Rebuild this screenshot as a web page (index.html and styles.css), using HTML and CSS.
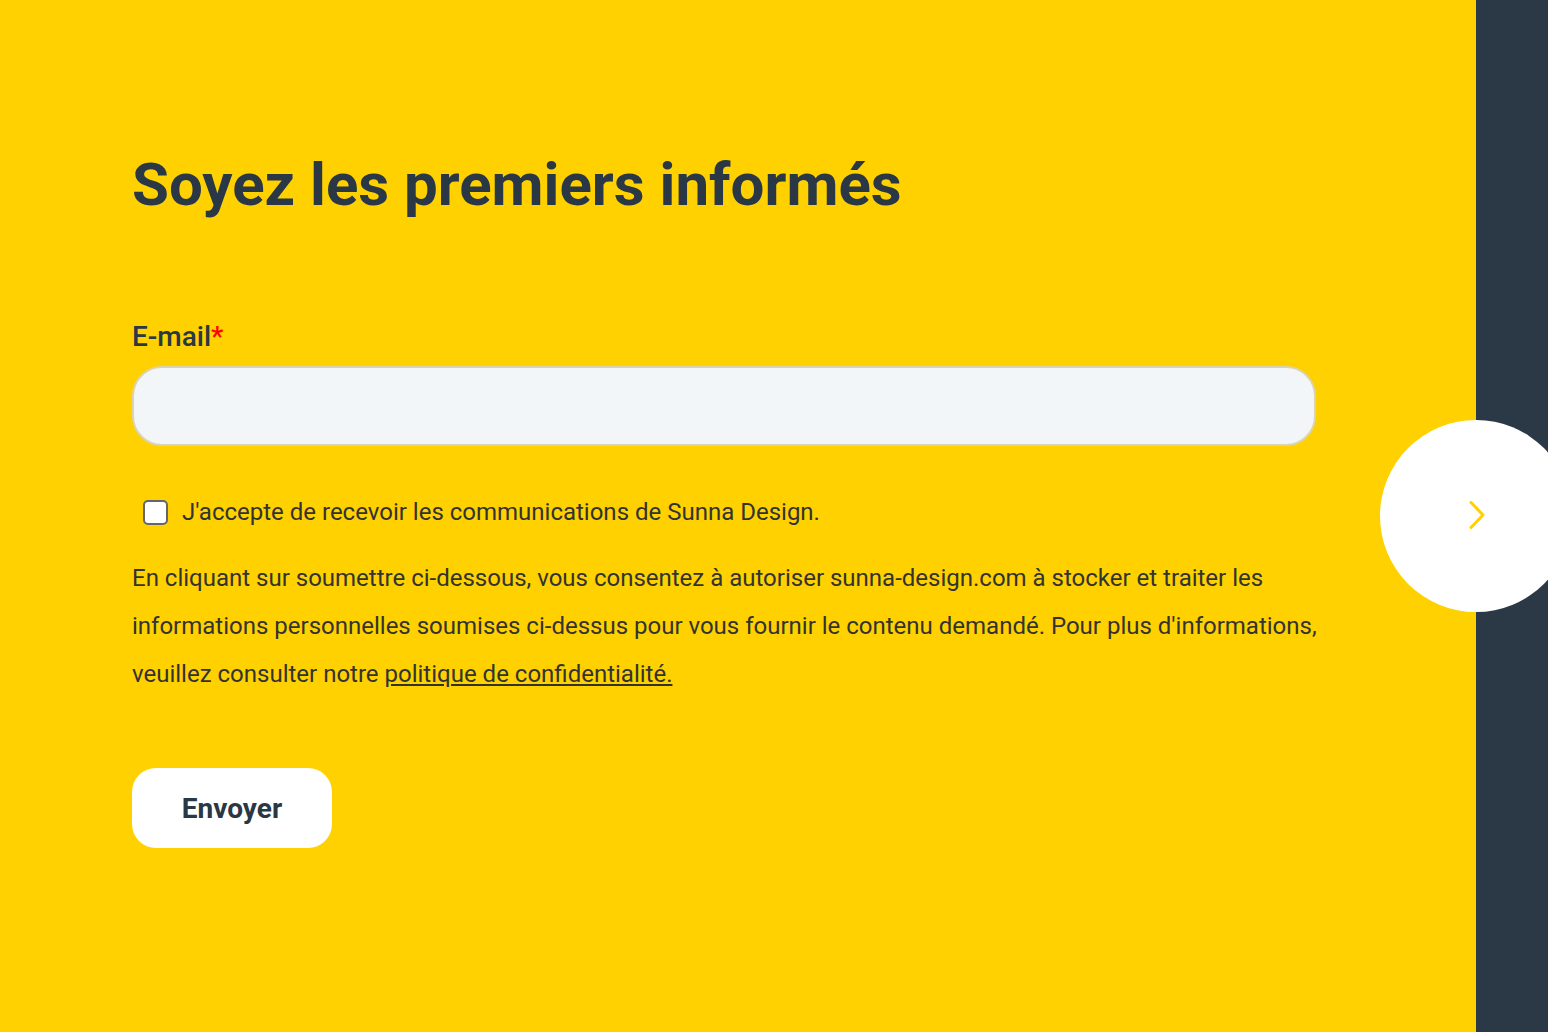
FILE: index.html
```html
<!DOCTYPE html>
<html lang="fr">
  <head>
    <meta charset="UTF-8" />
    <title>Soyez les premiers informés</title>
    <link rel="stylesheet" href="styles.css">
  </head>
  <body>
    <div class="page">
      <div class="main">
        <h1 class="main-title">Soyez les premiers informés</h1>
        <form class="form">
          <label class="field-label" for="email">E-mail<span class="required">*</span></label>
          <input type="email" id="email" class="field-input" />
          <label class="consent">
            <input type="checkbox" class="consent__box" />
            <span>J'accepte de recevoir les communications de Sunna Design.</span>
          </label>
          <p class="legal">
            En cliquant sur soumettre ci-dessous, vous consentez à autoriser sunna-design.com à stocker et traiter les
            informations personnelles soumises ci-dessus pour vous fournir le contenu demandé. Pour plus d'informations,
            veuillez consulter notre <a href="#">politique de confidentialité.</a>
          </p>
          <button type="button" class="submit">Envoyer</button>
        </form>
      </div>
      <div class="sidebar"></div>
      <button class="next" type="button" aria-label="Suivant">
        <svg width="18" height="30" viewBox="0 0 18 30">
          <path d="M3 1.5 L15 14 L3 26.5" fill="none" stroke="#ffd100" stroke-width="3" stroke-linecap="round" stroke-linejoin="round" />
        </svg>
      </button>
    </div>
  </body>
</html>
```

FILE: styles.css
```css
html,
body {
  margin: 0;
  padding: 0;
  width: 100%;
  height: 100%;
}
body {
  font-family: Roboto, "Liberation Sans", sans-serif;
  color: #333;
}
.page {
  display: flex;
  min-height: 100%;
  position: relative;
  overflow: hidden;
}
.main {
  flex: 1;
  min-width: 0;
  background: #ffd100;
  padding: 149px 0 0 132px;
}
.sidebar {
  width: 72px;
  flex-shrink: 0;
  background: #2b3845;
}
.main-title {
  margin: 0 0 100px;
  font-size: 60px;
  line-height: 72px;
  font-weight: 700;
  color: #2a3744;
}
.form {
  display: flex;
  flex-direction: column;
  align-items: flex-start;
  width: 1186px;
}
.field-label {
  font-size: 28px;
  line-height: 32px;
  font-weight: 500;
  color: #2a3744;
  margin-bottom: 13px;
}
.required {
  color: #ff0000;
}
.field-input {
  box-sizing: border-box;
  width: 1184px;
  height: 80px;
  border: 2px solid #dcd3b0;
  border-radius: 30px;
  background: #f2f6f9;
  outline: none;
  font-size: 22px;
  padding: 0 24px;
}
.consent {
  display: flex;
  align-items: center;
  margin: 52px 0 0 11px;
  font-size: 24px;
  line-height: 28px;
  color: #333;
}
.consent__box {
  appearance: none;
  width: 25px;
  height: 25px;
  margin: 0 14px 0 0;
  border: 2px solid #666;
  border-radius: 5px;
  background: #fff;
  box-sizing: border-box;
}
.legal {
  margin: 28px 0 0;
  font-size: 24px;
  line-height: 48px;
  color: #333;
}
.legal a {
  color: #333;
}
.submit {
  margin-top: 70px;
  width: 200px;
  height: 80px;
  border: none;
  border-radius: 24px;
  background: #fff;
  font-family: Roboto, "Liberation Sans", sans-serif;
  font-size: 28px;
  font-weight: 700;
  color: #2a3744;
  cursor: pointer;
}
.next {
  position: absolute;
  left: 1380px;
  top: 420px;
  width: 192px;
  height: 192px;
  border: none;
  border-radius: 50%;
  background: #fff;
  display: flex;
  align-items: center;
  justify-content: flex-start;
  padding: 0 0 0 88px;
  cursor: pointer;
}
.next svg {
  display: block;
}
```
